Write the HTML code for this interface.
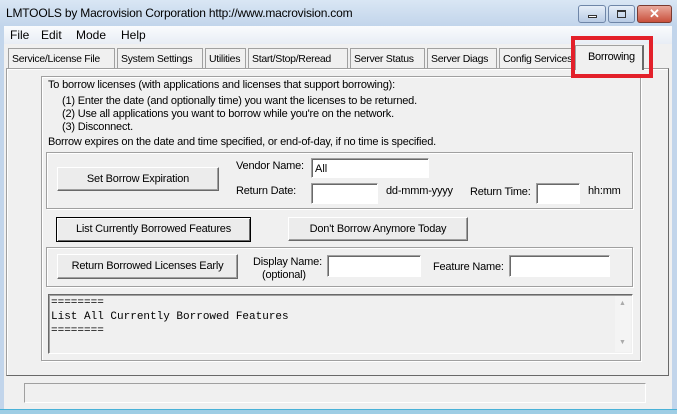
<!DOCTYPE html>
<html><head><style>
*{margin:0;padding:0;box-sizing:border-box}
body{width:677px;height:414px;overflow:hidden;background:#f0f0f0;font-family:"Liberation Sans",sans-serif;font-size:11px;color:#000;position:relative}
.a{position:absolute;white-space:nowrap}
.btn{position:absolute;background:#ececec;border:1px solid;border-color:#fff #696969 #696969 #fff;box-shadow:inset -1px -1px 0 #a0a0a0;text-align:center;font-size:11px;letter-spacing:-0.2px;white-space:nowrap}
.inp{position:absolute;background:#fff;border:1px solid;border-color:#a0a0a0 #fff #fff #a0a0a0;box-shadow:inset 1px 1px 0 #696969}
.grp{position:absolute;border:1px solid #a0a0a0;box-shadow:1px 1px 0 #fff, inset 1px 1px 0 #fff}
.tab{position:absolute;top:48px;height:21px;border:1px solid #a0a0a0;border-bottom:none;background:#f0f0f0;padding:4px 0 0 3px;font-size:10.5px;letter-spacing:-0.3px;white-space:nowrap;overflow:hidden}
.l{font-size:11px;letter-spacing:-0.2px}
</style></head><body>
<div class="a" style="left:0;top:0;width:677px;height:26px;background:linear-gradient(#d9e6f4,#c2d5eb)"></div>
<div class="a" style="left:0;top:26px;width:4px;height:388px;background:#c2d5eb"></div>
<div class="a" style="right:0;top:26px;width:5px;height:388px;background:#c2d5eb"></div>
<div class="a" style="left:0;top:409px;width:677px;height:5px;background:#9ecde4;border-top:1px solid #4ab2d8"></div>
<div class="a" style="left:6px;top:6px;font-size:12px;letter-spacing:-0.2px">LMTOOLS by Macrovision Corporation http://www.macrovision.com</div>
<div class="a" style="left:578px;top:5px;width:28px;height:18px;border:1px solid #6f86a8;border-radius:3px;background:linear-gradient(#e6eef8,#b8cbe4)"><div class="a" style="left:9px;top:9px;width:9px;height:3px;border:1px solid #333;background:#fff"></div></div>
<div class="a" style="left:608px;top:5px;width:27px;height:18px;border:1px solid #6f86a8;border-radius:3px;background:linear-gradient(#e6eef8,#b8cbe4)"><div class="a" style="left:8px;top:4px;width:9px;height:8px;border:1px solid #333;border-top-width:2px"></div></div>
<div class="a" style="left:637px;top:5px;width:35px;height:18px;border:1px solid #7a3a30;border-radius:3px;background:linear-gradient(#e9a99c,#c9503c);color:#fff;font-weight:bold;font-size:13px;text-align:center;line-height:16px">✕</div>
<div class="a" style="left:4px;top:26px;width:668px;height:18px;background:linear-gradient(#fafbfd,#e8edf5)"></div>
<div class="a" style="left:10px;top:28px;font-size:12px">File</div>
<div class="a" style="left:41px;top:28px;font-size:12px">Edit</div>
<div class="a" style="left:76px;top:28px;font-size:12px">Mode</div>
<div class="a" style="left:121px;top:28px;font-size:12px">Help</div>
<div class="tab" style="left:8px;width:107px">Service/License File</div>
<div class="tab" style="left:117px;width:86px">System Settings</div>
<div class="tab" style="left:205px;width:41px">Utilities</div>
<div class="tab" style="left:248px;width:100px">Start/Stop/Reread</div>
<div class="tab" style="left:350px;width:75px">Server Status</div>
<div class="tab" style="left:427px;width:70px">Server Diags</div>
<div class="tab" style="left:499px;width:78px">Config Services</div>
<div class="a" style="left:6px;top:68px;width:663px;height:308px;border:1px solid #a0a0a0;border-right-color:#696969;border-bottom-color:#696969;box-shadow:inset 1px 1px 0 #fff"></div>
<div class="tab" style="left:575px;top:45px;height:25px;width:69px;padding:5px 0 0 12px;border-right:2px solid #696969;z-index:2;font-size:11px">Borrowing</div>
<div class="a" style="left:41px;top:76px;width:600px;height:285px;border:1px solid #a0a0a0;box-shadow:1px 1px 0 #fff,inset 1px 1px 0 #fff"></div>
<div class="a l" style="left:48px;top:79px">To borrow licenses (with applications and licenses that support borrowing):</div>
<div class="a l" style="left:62px;top:95px">(1) Enter the date (and optionally time) you want the licenses to be returned.</div>
<div class="a l" style="left:62px;top:108px">(2) Use all applications you want to borrow while you're on the network.</div>
<div class="a l" style="left:62px;top:121px">(3) Disconnect.</div>
<div class="a l" style="left:48px;top:136px">Borrow expires on the date and time specified, or end-of-day, if no time is specified.</div>
<div class="grp" style="left:46px;top:152px;width:587px;height:57px"></div>
<div class="btn" style="left:57px;top:167px;width:162px;height:24px;line-height:22px">Set Borrow Expiration</div>
<div class="a l" style="left:236px;top:160px">Vendor Name:</div>
<div class="inp" style="left:311px;top:158px;width:118px;height:20px;padding:4px 0 0 3px">All</div>
<div class="a l" style="left:236px;top:185px">Return Date:</div>
<div class="inp" style="left:311px;top:183px;width:67px;height:21px"></div>
<div class="a l" style="left:386px;top:185px">dd-mmm-yyyy</div>
<div class="a l" style="left:470px;top:186px">Return Time:</div>
<div class="inp" style="left:536px;top:183px;width:44px;height:21px"></div>
<div class="a l" style="left:588px;top:185px">hh:mm</div>
<div class="btn" style="left:56px;top:217px;width:195px;height:25px;line-height:22px;border:1px solid #000;box-shadow:inset 1px 1px 0 #fff,inset -1px -1px 0 #696969">List Currently Borrowed Features</div>
<div class="btn" style="left:288px;top:217px;width:180px;height:24px;line-height:22px">Don't Borrow Anymore Today</div>
<div class="grp" style="left:46px;top:247px;width:587px;height:40px"></div>
<div class="btn" style="left:57px;top:254px;width:181px;height:25px;line-height:23px">Return Borrowed Licenses Early</div>
<div class="a l" style="left:253px;top:256px">Display Name:</div>
<div class="a l" style="left:262px;top:269px">(optional)</div>
<div class="inp" style="left:327px;top:255px;width:94px;height:22px"></div>
<div class="a l" style="left:433px;top:261px">Feature Name:</div>
<div class="inp" style="left:509px;top:255px;width:101px;height:22px"></div>
<div class="a" style="left:48px;top:294px;width:585px;height:60px;border:1px solid;border-color:#696969 #fff #fff #696969;box-shadow:inset 1px 1px 0 #a0a0a0"></div>
<div class="a" style="left:615px;top:296px;width:16px;height:56px;background:#f4f4f4"><div class="a" style="left:4px;top:4px;font-size:7px;color:#aaa">▲</div><div class="a" style="left:4px;top:43px;font-size:7px;color:#aaa">▼</div></div>
<div class="a" style="left:51px;top:296px;font-family:'Liberation Mono',monospace;font-size:11px;line-height:14px">========<br>List All Currently Borrowed Features<br>========</div>
<div class="a" style="left:24px;top:383px;width:622px;height:20px;border:1px solid;border-color:#a0a0a0 #fff #fff #a0a0a0"></div>
<div class="a" style="left:571px;top:36px;width:82px;height:42px;border:4px solid #e3202a;z-index:5"></div>
</body></html>
